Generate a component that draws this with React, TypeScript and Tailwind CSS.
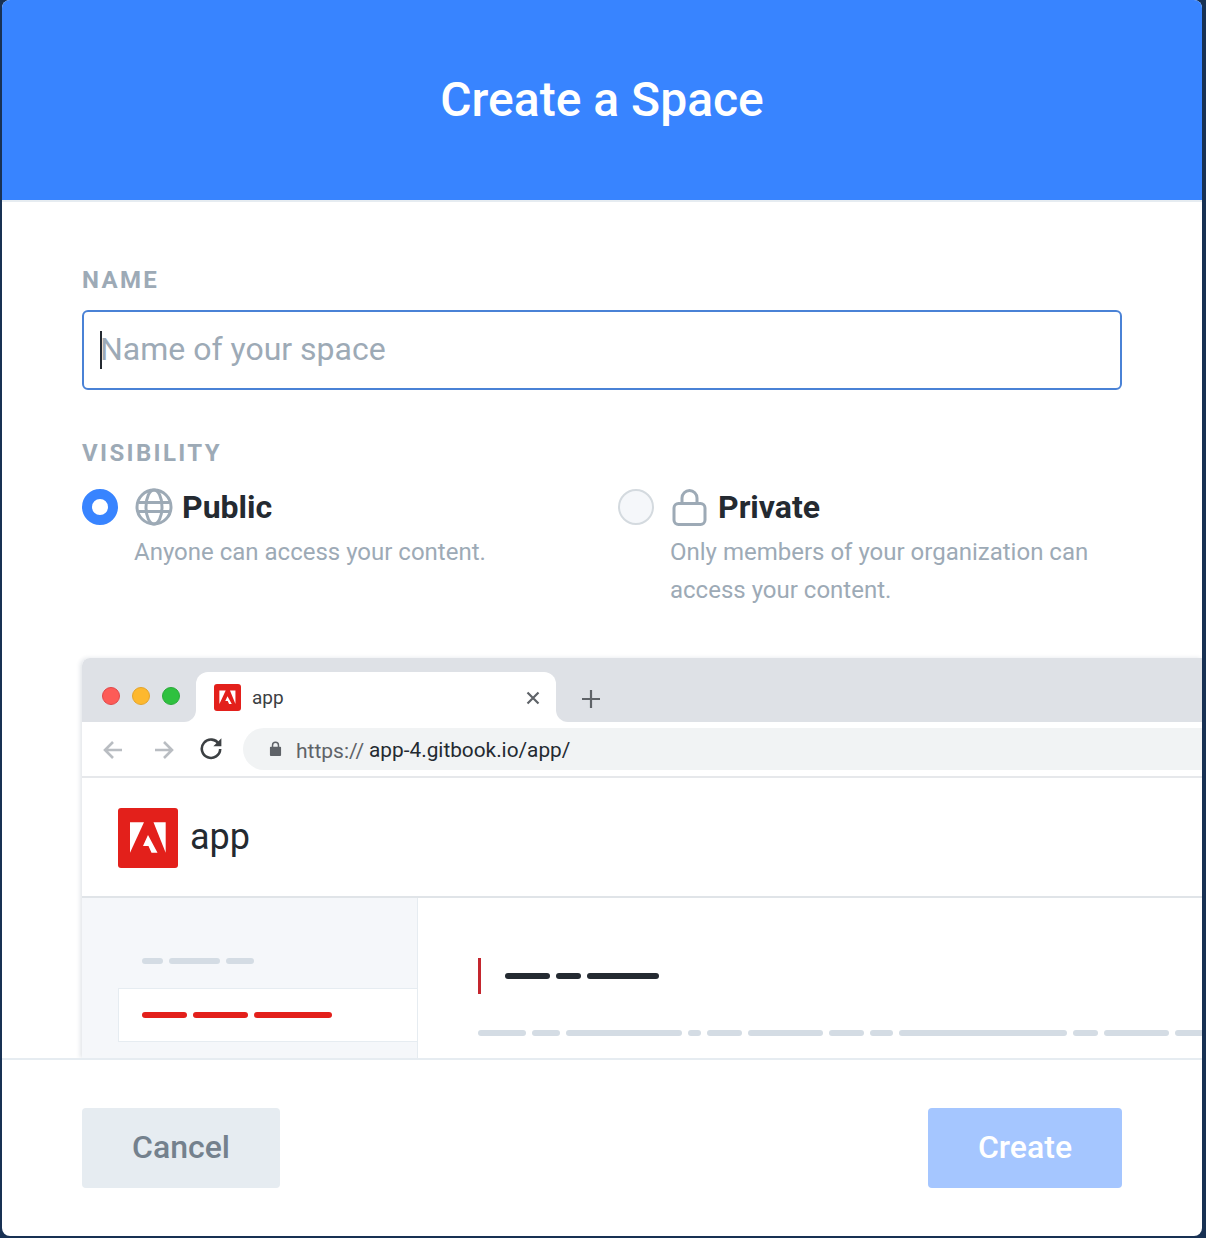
import React from "react";

const font = { fontFamily: "Roboto, sans-serif" };

function AdobeMark({ className }: { className: string }) {
  return (
    <div className={className}>
      <svg viewBox="0 0 60 60" className="w-full h-full">
        <path d="M12 14.3h14L12 44.7z" fill="#fff" />
        <path d="M35.5 14.3h12.2v30.4z" fill="#fff" />
        <path d="M30 27l9.5 17.7h-6l-3-6.7H25z" fill="#fff" />
      </svg>
    </div>
  );
}

function Bars({ items, className }: { items: number[]; className: string }) {
  return (
    <div className="flex gap-[6px]">
      {items.map((w, i) => (
        <div key={i} className={className} style={{ width: w }} />
      ))}
    </div>
  );
}

export default function App() {
  return (
    <div className="w-[1206px] h-[1238px] bg-[#183153] pl-[2px] pr-[4px] pb-[2px] overflow-hidden" style={font}>
      <div className="w-[1200px] h-[1236px] bg-white rounded-[8px] overflow-hidden flex flex-col">
        <header className="h-[202px] shrink-0 bg-[#3884ff] border-b-[2px] border-[#e6ecf1] flex items-center justify-center">
          <h1 className="text-white text-[48px] leading-[54px] font-medium">Create a Space</h1>
        </header>

        <main className="h-[856px] shrink-0 overflow-hidden pl-[80px] pt-[66px]">
          <div className="w-[1040px]">
            <div className="text-[24px] leading-[24px] font-bold tracking-[2.35px] text-[#9daab6]">NAME</div>
            <div className="mt-[18px] h-[80px] rounded-[6px] border-[2px] border-[#4a82d6] flex items-center pl-[16px]">
              <div className="w-[2px] h-[38px] bg-[#242a31] shrink-0" />
              <span className="text-[32px] leading-[38px] text-[#9daab6] -ml-[2px] -mt-[3px]">Name of your space</span>
            </div>

            <div className="mt-[51px] text-[24px] leading-[24px] font-bold tracking-[2.35px] text-[#9daab6]">VISIBILITY</div>

            <div className="mt-[23px] flex">
              <div className="w-[536px] flex items-start">
                <div className="w-[36px] h-[36px] rounded-full border-[10px] border-[#3884ff] bg-white mt-[1px] shrink-0" />
                <div className="ml-[16px]">
                  <div className="flex items-center h-[38px]">
                    <svg viewBox="0 0 38 38" className="w-[38px] h-[38px] ml-[1px]" fill="none" stroke="#9daab6" strokeWidth="3">
                      <circle cx="19" cy="19" r="17" />
                      <ellipse cx="19" cy="19" rx="8" ry="17" />
                      <path d="M3.5 14.5h31M3.5 23.5h31" />
                    </svg>
                    <span className="ml-[9px] text-[32px] leading-[38px] font-bold text-[#242a31]">Public</span>
                  </div>
                  <p className="mt-[7px] text-[24px] leading-[38px] text-[#9daab6]">Anyone can access your content.</p>
                </div>
              </div>
              <div className="flex items-start">
                <div className="w-[36px] h-[36px] rounded-full border-[2px] border-[#d4dadf] bg-[#f5f7fa] mt-[1px] shrink-0" />
                <div className="ml-[16px]">
                  <div className="flex items-center h-[38px]">
                    <svg viewBox="0 0 38 38" className="w-[38px] h-[38px] -ml-[0.5px]" fill="none" stroke="#9daab6" strokeWidth="3">
                      <rect x="4" y="15.5" width="31" height="21" rx="4.5" />
                      <path d="M12 15.5V10a7.5 7.5 0 0 1 15 0v5.5" />
                    </svg>
                    <span className="ml-[10.5px] text-[32px] leading-[38px] font-bold text-[#242a31]">Private</span>
                  </div>
                  <p className="mt-[7px] w-[440px] text-[24px] leading-[38px] text-[#9daab6]">Only members of your organization can access your content.</p>
                </div>
              </div>
            </div>
          </div>

          <div className="mt-[49px] w-[1120px] h-[400px] bg-white rounded-tl-[8px] shadow-[-2px_0_4px_rgba(24,49,83,0.12)] overflow-hidden">
            <div className="h-[64px] flex bg-white">
              <div className="w-[114px] h-full bg-[#dee1e6] rounded-br-[12px] flex items-center gap-[12px] pl-[20px] pt-[12px] shrink-0">
                <div className="w-[18px] h-[18px] rounded-full bg-[#fd5b57] border border-[#e0484a]" />
                <div className="w-[18px] h-[18px] rounded-full bg-[#fdb82e] border border-[#e3a42c]" />
                <div className="w-[18px] h-[18px] rounded-full bg-[#2ec13f] border border-[#2aaa3a]" />
              </div>
              <div className="w-[360px] h-full bg-[#dee1e6] shrink-0 pt-[14px]">
                <div className="h-[50px] bg-white rounded-t-[12px] flex items-center pl-[18px] pr-[16px]">
                  <AdobeMark className="w-[27px] h-[27px] bg-[#e3201b] rounded-[3px] shrink-0" />
                  <span className="ml-[11px] text-[19px] text-[#3c4043] translate-y-[1px]">app</span>
                  <svg viewBox="0 0 14 14" className="w-[14px] h-[14px] ml-auto translate-y-[1px]" fill="none" stroke="#5f6368" strokeWidth="2.2">
                    <path d="M1.5 1.5l11 11M12.5 1.5l-11 11" />
                  </svg>
                </div>
              </div>
              <div className="flex-1 h-full bg-[#dee1e6] rounded-bl-[12px] flex items-center pl-[26px] pt-[18px]">
                <svg viewBox="0 0 18 18" className="w-[18px] h-[18px]" fill="none" stroke="#5f6368" strokeWidth="2.2">
                  <path d="M9 0v18M0 9h18" />
                </svg>
              </div>
            </div>

            <div className="h-[56px] border-b-[2px] border-[#e6e8eb] flex items-center pl-[21px]">
              <svg viewBox="0 0 20 20" className="w-[20px] h-[20px] translate-y-[1px]" fill="none" stroke="#b9bdc2" strokeWidth="2.6">
                <path d="M19 10H2M10 2l-8 8 8 8" />
              </svg>
              <svg viewBox="0 0 20 20" className="w-[20px] h-[20px] ml-[31px] translate-y-[1px]" fill="none" stroke="#b9bdc2" strokeWidth="2.6">
                <path d="M1 10h17M10 2l8 8-8 8" />
              </svg>
              <svg viewBox="0 0 24 24" className="w-[24px] h-[24px] ml-[25px] -mt-[2px]" fill="none" stroke="#3c4043" strokeWidth="2.6">
                <path d="M20 8.2A9.2 9.2 0 1 0 21.2 13" />
                <path d="M22.4 2.2v8h-8z" fill="#3c4043" stroke="none" />
              </svg>
              <div className="ml-[20px] flex-1 h-[42px] bg-[#f1f3f4] rounded-l-[21px] flex items-center pl-[26px]">
                <svg viewBox="0 0 14 16" className="w-[13px] h-[15px] -mt-[2px]" fill="#5f6368">
                  <path d="M3 6V4.5a4 4 0 0 1 8 0V6h1a1 1 0 0 1 1 1v8a1 1 0 0 1-1 1H2a1 1 0 0 1-1-1V7a1 1 0 0 1 1-1zm1.6 0h4.8V4.5a2.4 2.4 0 0 0-4.8 0z" />
                </svg>
                <span className="ml-[14px] text-[21px] text-[#5f6368] translate-y-[3px]">https://</span>
                <span className="ml-[5px] text-[20.8px] text-[#242a31] translate-y-[2px]">app-4.gitbook.io/app/</span>
              </div>
            </div>

            <div className="h-[120px] border-b-[2px] border-[#e0e4e8] flex items-center pl-[36px] pt-[2px]">
              <AdobeMark className="w-[60px] h-[60px] bg-[#e3201b] rounded-[3px] shrink-0" />
              <span className="ml-[12px] text-[36px] text-[#242a31] translate-y-[-1px]">app</span>
            </div>

            <div className="flex h-[160px]">
              <div className="w-[336px] shrink-0 bg-[#f5f7fa] border-r-[1px] border-[#e6ecf1] pt-[60px] pl-[36px]">
                <div className="pl-[24px]">
                  <Bars items={[21, 51, 28]} className="h-[6px] rounded-full bg-[#d4dce4]" />
                </div>
                <div className="mt-[24px] h-[54px] bg-white border border-[#e6ecf1] border-r-0 flex items-center pl-[23px]">
                  <Bars items={[45, 55, 78]} className="h-[6px] rounded-full bg-[#e3201b]" />
                </div>
              </div>
              <div className="flex-1 pl-[60px] pt-[60px]">
                <div className="h-[36px] flex items-center">
                  <div className="w-[3px] h-[36px] bg-[#c4262e]" />
                  <div className="ml-[24px]">
                    <Bars items={[45, 25, 72]} className="h-[6px] rounded-full bg-[#242a31]" />
                  </div>
                </div>
                <div className="mt-[36px]">
                  <Bars items={[48, 28, 116, 13, 35, 75, 35, 23, 168, 25, 65, 60]} className="h-[6px] rounded-full bg-[#d4dce4] shrink-0" />
                </div>
              </div>
            </div>
          </div>
        </main>

        <footer className="flex-1 border-t-[2px] border-[#e6ecf1] flex items-start justify-between px-[80px] pt-[48px]">
          <button className="w-[198px] h-[80px] rounded-[4px] bg-[#e6ecf1] text-[#74818d] text-[32px] font-medium pb-[2px]">Cancel</button>
          <button className="w-[194px] h-[80px] rounded-[4px] bg-[#a5c6ff] text-white text-[32px] font-medium pb-[2px]">Create</button>
        </footer>
      </div>
    </div>
  );
}
